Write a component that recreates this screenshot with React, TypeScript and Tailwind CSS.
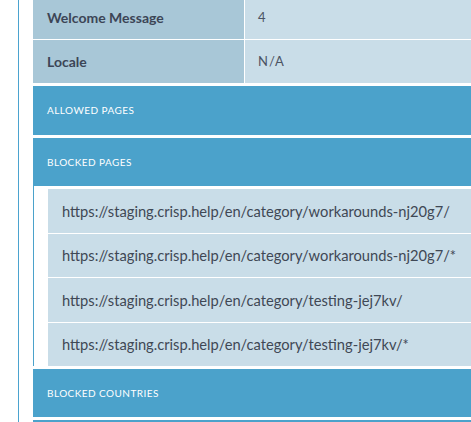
import React from "react";

const urls = [
  "https://staging.crisp.help/en/category/workarounds-nj20g7/",
  "https://staging.crisp.help/en/category/workarounds-nj20g7/*",
  "https://staging.crisp.help/en/category/testing-jej7kv/",
  "https://staging.crisp.help/en/category/testing-jej7kv/*",
];

function Row({ label, value, last }: { label: string; value: string; last?: boolean }) {
  return (
    <div className={`flex ${last ? "h-[43px]" : "h-[44px] border-b border-white"}`}>
      <div className="w-[212px] shrink-0 bg-[#a8c7d7] border-r border-white flex items-center pl-[14px] text-[14px] font-bold text-[#3c4556]">
        {label}
      </div>
      <div className="flex-1 bg-[#c9dde8] flex items-center pl-[13px] text-[13px] tracking-[1px] text-[#4b5363]">
        {value}
      </div>
    </div>
  );
}

function Bar({ title, h = "h-[48px]" }: { title: string; h?: string }) {
  return (
    <div className={`${h} bg-[#4ba2cb] flex items-center pl-[14px] text-[10px] uppercase text-white tracking-[0.45px]`}>
      {title}
    </div>
  );
}

export default function App() {
  return (
    <div
      className="w-[471px] h-[422px] overflow-hidden bg-white"
      style={{ fontFamily: "Lato, 'Noto Sans', sans-serif" }}
    >
      <div className="ml-[18px] border-l border-[#4ba3cf] pl-[14px] h-[440px] -mt-[4px]">
        <div className="flex flex-col">
          <Row label="Welcome Message" value="4" />
          <Row label="Locale" value="N/A" last />
          <div className="h-[3px]" />
          <Bar title="Allowed pages" h="h-[49px]" />
          <div className="h-[3px]" />
          <Bar title="Blocked pages" />
          <div className="border-l border-[#4ba2cb] pl-[14px] pt-[3px] flex flex-col gap-[1px]">
            {urls.map((u) => (
              <div
                key={u}
                className="h-[43.5px] bg-[#c9dde8] flex items-center pl-[14px] text-[14.7px] text-[#3f4855] whitespace-nowrap"
              >
                {u}
              </div>
            ))}
          </div>
          <div className="h-[3px]" />
          <Bar title="Blocked countries" />
          <div className="h-[3px]" />
          <Bar title="" />
        </div>
      </div>
    </div>
  );
}
